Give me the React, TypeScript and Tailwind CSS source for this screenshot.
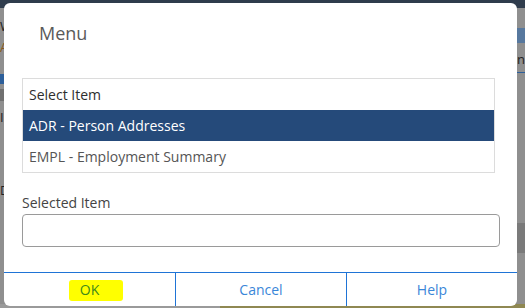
export default function App() {
  const font = { fontFamily: '"Open Sans", "Noto Sans", Arial, sans-serif' };
  return (
    <div className="relative h-[308px] w-[525px] overflow-hidden bg-[#8c8c8c]" style={font}>
      {/* dimmed page behind the dialog */}
      <div className="flex h-full w-full flex-col">
        <div className="h-[8px] bg-[#2f3c4c]" />
        <div className="flex flex-1">
          <div className="flex w-[8px] flex-col bg-[#8f8f8f] text-[13px] leading-none">
            <span className="mt-[12px] text-[#222]">W</span>
            <span className="mt-[8px] text-[#8a5a1a]">A</span>
            <span className="mt-[20px] h-[10px] w-[4px] bg-[#2d5f9a]" />
            <span className="mt-[5px] h-[12px] bg-[#707070]" />
            <span className="mt-[10px] text-[#222]">I</span>
            <span className="mt-[60px] text-[#222]">D</span>
          </div>
          <div className="flex-1" />
          <div className="flex w-[8px] flex-col bg-[#8f8f8f]">
            <span className="mt-[20px] h-[15px] bg-[#57789e]" />
            <span className="mt-[10px] text-[13px] leading-none text-[#222]">n</span>
            <span className="mt-[6px] h-[1px] bg-[#2d5f9a]" />
            <span className="mt-[150px] h-[30px] bg-[#7a7a7a]" />
          </div>
        </div>
        <div className="flex h-[4px]">
          <div className="w-[220px] bg-[#9a9a9a]" />
          <div className="flex-1 bg-[#8f8852]" />
        </div>
      </div>

      {/* dialog */}
      <div className="absolute left-[4px] top-[3px] flex h-[303px] w-[513px] flex-col overflow-hidden rounded-[6px] bg-white">
        <h2 className="pl-[35px] pt-[18px] text-[18px] leading-[25px] text-[#5a5a5a]">Menu</h2>

        <div className="mt-[32px] px-[18px]">
          <div className="w-[473px] border border-[#dcdcdc] text-[14px]">
            <div className="flex h-[31px] items-center px-[6px] font-medium text-[#2e2e2e]">Select Item</div>
            <div className="flex h-[31px] items-center bg-[#254a7a] px-[6px] text-white">ADR - Person Addresses</div>
            <div className="flex h-[31px] items-center px-[6px] text-[#555]">EMPL - Employment Summary</div>
          </div>

          <label className="mt-[20px] block text-[14px] leading-[20px] text-[#444]">Selected Item</label>
          <div className="mt-[1px] h-[33px] w-[478px] rounded-[4px] border border-[#9a9a9a]" />
        </div>

        <div className="mt-auto flex h-[34px] border-t border-[#1f74d6] text-[14px] text-[#3a86d8]">
          <button type="button" className="flex w-[171px] items-center justify-center">
            <span className="relative leading-[21px] text-[#3f8a1a]">
              <span className="absolute -left-[11px] -right-[24px] top-[1px] bottom-[-1px] rounded-[3px] bg-[#ffff00]" />
              <span className="relative">OK</span>
            </span>
          </button>
          <button type="button" className="flex w-[171px] items-center justify-center border-l border-[#1f74d6]">
            Cancel
          </button>
          <button type="button" className="flex flex-1 items-center justify-center border-l border-[#1f74d6]">
            Help
          </button>
        </div>
      </div>
    </div>
  );
}
